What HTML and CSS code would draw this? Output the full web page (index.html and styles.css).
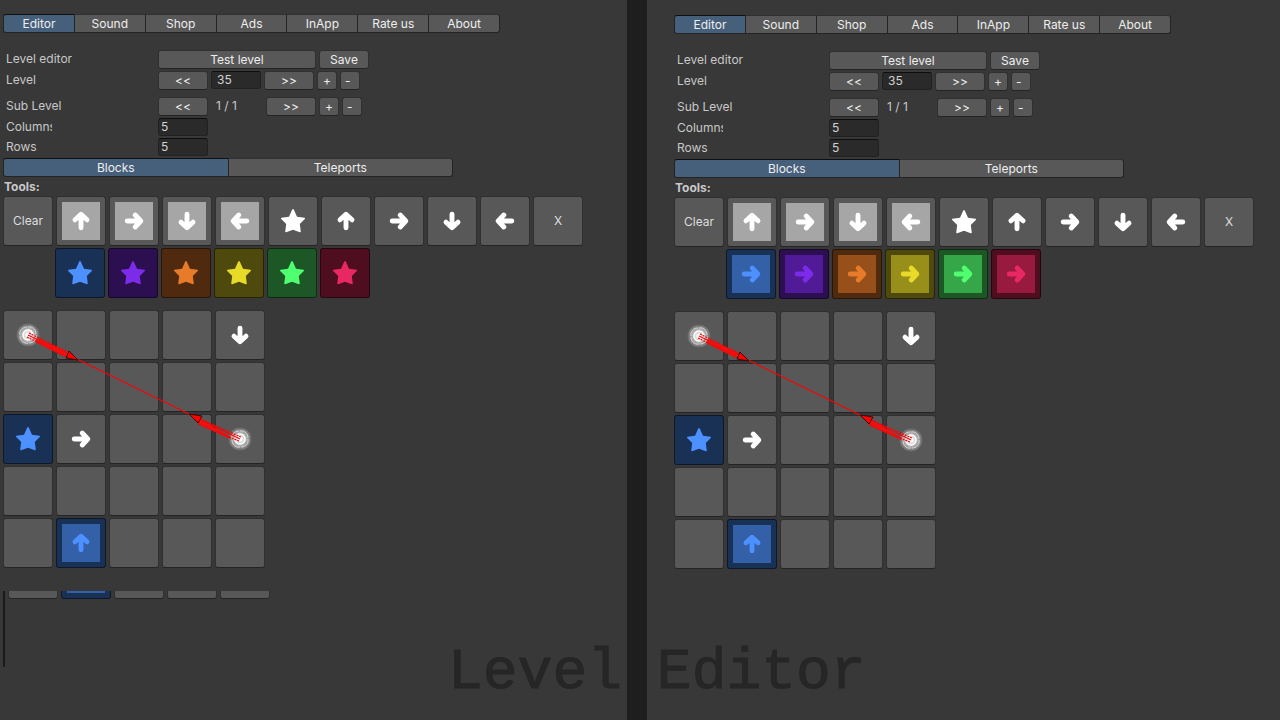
FILE: index.html
```html
<!DOCTYPE html>
<html lang="en">

<head>
    <meta charset="utf-8">
    <meta name="viewport" content="width=device-width, initial-scale=1.0">
    <title>Level Editor</title>
    <link rel="stylesheet" href="styles.css">
</head>

<body>
    <svg class="symbols" aria-hidden="true">
        <symbol id="arrow" viewBox="0 0 24 24">
            <path d="M5.2 12H18M13.2 6l5.6 6-5.6 6" fill="none" stroke="currentColor" stroke-width="4.9" stroke-linecap="round" stroke-linejoin="round" />
        </symbol>
        <symbol id="star" viewBox="0 0 24 24">
            <path d="M12 0Q12.500 0 13 1L16 7.800 23.500 8.800Q24.500 9.200 23.800 10L18.800 15 19.800 22.500Q19.600 23.500 18.800 23.300L12 20.800 5.200 23.300Q4.400 23.500 4.200 22.500L5.200 15 .2 10Q-.5 9.200.5 8.800L8 7.800 11 1Q11.500 0 12 0z" fill="currentColor" />
        </symbol>
        <radialGradient id="glow">
            <stop offset="0" stop-color="#fff" />
            <stop offset=".4" stop-color="#fff" stop-opacity=".7" />
            <stop offset=".7" stop-color="#fff" stop-opacity=".35" />
            <stop offset="1" stop-color="#fff" stop-opacity="0" />
        </radialGradient>
        <symbol id="portal" viewBox="0 0 24 24">
            <circle cx="12" cy="12" r="12" fill="url(#glow)" />
            <g fill="none" stroke="#fff">
                <circle cx="12" cy="12" r="5" stroke-width="1.500" />
                <path d="M12 4c5-1 8 3 8 7M20 12c1 5-3 8-7 8M12 20c-5 1-8-3-8-7M4 12c-1-5 3-8 7-8" stroke-width=".9" opacity=".7" />
                <path d="M14 2c5 1 8 4 8 8M22 14c-1 5-4 8-8 8M10 22c-5-1-8-4-8-8M2 10c1-5 4-8 8-8" stroke-width=".6" opacity=".15" />
            </g>
            <circle cx="12" cy="12" r="2.500" fill="#fff" />
        </symbol>
    </svg>

    <main>
        <section class="panel">
            <nav class="tabs">
                <button class="active">Editor</button>
                <button>Sound</button>
                <button>Shop</button>
                <button>Ads</button>
                <button>InApp</button>
                <button>Rate us</button>
                <button>About</button>
            </nav>

            <div class="fields">
                <div class="row">
                    <span class="name">Level editor</span>
                    <button class="test">Test level</button>
                    <button class="wide">Save</button>
                </div>
                <div class="row">
                    <label class="name" for="level-a">Level</label>
                    <button class="wide">&lt;&lt;</button>
                    <input class="level" id="level-a" type="text" value="35">
                    <button class="wide">&gt;&gt;</button>
                    <button class="small">+</button>
                    <button class="small minus">-</button>
                </div>
                <div class="row sub">
                    <span class="name">Sub Level</span>
                    <button class="wide">&lt;&lt;</button>
                    <span class="count">1 / 1</span>
                    <button class="wide">&gt;&gt;</button>
                    <button class="small">+</button>
                    <button class="small minus">-</button>
                </div>
                <div class="row">
                    <label class="name" for="columns-a"><span class="short">Columns</span></label>
                    <input id="columns-a" type="text" value="5">
                </div>
                <div class="row">
                    <label class="name" for="rows-a">Rows</label>
                    <input id="rows-a" type="text" value="5">
                </div>
            </div>

            <nav class="tabs modes">
                <button class="active">Blocks</button>
                <button>Teleports</button>
            </nav>

            <h2>Tools:</h2>
            <div class="cells tools"></div>
            <div class="cells colors" data-icon="star"></div>
            <div class="board"></div>
            <div class="rest">
                <div class="cells strip"></div>
            </div>
        </section>

        <section class="panel">
            <nav class="tabs">
                <button class="active">Editor</button>
                <button>Sound</button>
                <button>Shop</button>
                <button>Ads</button>
                <button>InApp</button>
                <button>Rate us</button>
                <button>About</button>
            </nav>

            <div class="fields">
                <div class="row">
                    <span class="name">Level editor</span>
                    <button class="test">Test level</button>
                    <button class="wide">Save</button>
                </div>
                <div class="row">
                    <label class="name" for="level-b">Level</label>
                    <button class="wide">&lt;&lt;</button>
                    <input class="level" id="level-b" type="text" value="35">
                    <button class="wide">&gt;&gt;</button>
                    <button class="small">+</button>
                    <button class="small minus">-</button>
                </div>
                <div class="row sub">
                    <span class="name">Sub Level</span>
                    <button class="wide">&lt;&lt;</button>
                    <span class="count">1 / 1</span>
                    <button class="wide">&gt;&gt;</button>
                    <button class="small">+</button>
                    <button class="small minus">-</button>
                </div>
                <div class="row">
                    <label class="name" for="columns-b"><span class="short">Columns</span></label>
                    <input id="columns-b" type="text" value="5">
                </div>
                <div class="row">
                    <label class="name" for="rows-b">Rows</label>
                    <input id="rows-b" type="text" value="5">
                </div>
            </div>

            <nav class="tabs modes">
                <button class="active">Blocks</button>
                <button>Teleports</button>
            </nav>

            <h2>Tools:</h2>
            <div class="cells tools"></div>
            <div class="cells colors" data-icon="tile right"></div>
            <div class="board"></div>
        </section>
    </main>

    <h1>Level Editor</h1>

    <template>
        <svg class="links" viewBox="0 0 262 258" aria-hidden="true">
            <path class="line" d="M25 25 237 129" />
            <path class="shaft" d="M34 28 65 42 62 47 32 32zM228 127 197 109 195 114 227 129z" />
            <path class="line" d="M26 23 64 42M24 27 62 46M238 127 197 109M236 131 195 114" stroke-dasharray="2 1" />
            <path class="head" d="M75 50 66 41 63 48zM186 104 199 106 195 113z" />
        </svg>
    </template>

    <script src="script.js"></script>
</body>

</html>
```
FILE: styles.css
```css
* {
    box-sizing: border-box;
}

body {
    margin: 0;
    background-color: #383838;
    color: #c8c8c8;
    font-family: Inter, sans-serif;
    font-size: 12px;
    line-height: 18px;
}

.symbols {
    position: absolute;
    width: 0;
    height: 0;
}

main {
    display: grid;
    grid-template-columns: 627fr 653fr;
    min-height: 100vh;
}

.panel {
    padding: 14px 0 0 3px;
}

.panel + .panel {
    padding: 15px 0 0 27px;
    border-left: 20px solid #1e1e1e;
}

button {
    height: 19px;
    padding: 0;
    border: 1px solid #303030;
    border-bottom-color: #242424;
    border-radius: 3px;
    background-color: #585858;
    color: #eeeeee;
    font: inherit;
}

input {
    width: 50px;
    height: 18px;
    padding: 0 2px;
    border: 1px solid #212121;
    border-top-color: #0d0d0d;
    border-radius: 3px;
    background-color: #2a2a2a;
    color: #d2d2d2;
    font: inherit;
}

.tabs {
    display: flex;
    width: 497px;
}

.tabs button {
    flex: 1;
    border-radius: 0;
    border-left-width: 0;
    border-right-color: #242424;
}

.tabs button:first-child {
    border-left-width: 1px;
    border-radius: 3px 0 0 3px;
}

.tabs button:last-child {
    border-radius: 0 3px 3px 0;
}

.tabs .active {
    background-color: #46607c;
    border-color: #101010 #242424 #242424;
}

.modes {
    width: 450px;
}

.fields {
    display: flex;
    flex-direction: column;
    gap: 2px;
    margin: 17px 0 2px;
}

.row {
    display: flex;
    gap: 3px;
}

.sub {
    margin-top: 5px;
}

.name {
    width: 152px;
    padding-left: 3px;
}

.short {
    display: block;
    width: 46px;
    overflow: hidden;
}

.test {
    width: 158px;
}

.wide {
    width: 50px;
}

.small {
    width: 20px;
}

.minus {
    padding-left: 4px;
    text-align: left;
}

.level {
    padding-left: 5px;
}

.count {
    width: 52px;
    padding-left: 5px;
}

h2 {
    margin: 0;
    padding: 1px 1px 0;
    font-size: 12px;
    line-height: 18px;
}

.cells {
    display: grid;
    grid-template-columns: repeat(auto-fill, 50px);
    grid-auto-rows: 50px;
    gap: 2px 3px;
}

.colors {
    margin: 2px 0 12px 52px;
}

.board {
    position: relative;
    width: 262px;
}

.cell {
    display: flex;
    align-items: center;
    justify-content: center;
    width: 50px;
    height: 50px;
    color: #ffffff;
}

.cell.text {
    color: #dddddd;
}

.cell svg {
    width: 24px;
    height: 24px;
}

.tile svg {
    width: 38px;
    height: 38px;
    padding: 7px;
    background-color: #a6a6a6;
}

.down svg {
    transform: rotate(90deg);
}

.left svg {
    transform: rotate(180deg);
}

.up svg {
    transform: rotate(270deg);
}

.blue, .purple, .orange, .yellow, .green, .red {
    border-color: rgba(0, 0, 0, 0.5);
}

.blue {
    background-color: #1a3156;
    color: #4d90ff;
}

.blue.tile svg {
    background-color: #3460a8;
}

.purple {
    background-color: #2b0f50;
    color: #7c2be8;
}

.purple.tile svg {
    background-color: #511b98;
}

.orange {
    background-color: #4f2a0e;
    color: #e87b29;
}

.orange.tile svg {
    background-color: #98501a;
}

.yellow {
    background-color: #4e490d;
    color: #e8da28;
}

.yellow.tile svg {
    background-color: #988f1a;
}

.green {
    background-color: #1c5725;
    color: #50ff70;
}

.green.tile svg {
    background-color: #35a749;
}

.red {
    background-color: #4f0d20;
    color: #e82860;
}

.red.tile svg {
    background-color: #981a3f;
}

.links {
    position: absolute;
    top: 0;
    left: 0;
    width: 262px;
    height: 258px;
    pointer-events: none;
}

.line {
    fill: none;
    stroke: #ff0000;
    stroke-width: 1.2;
}

.shaft {
    fill: #f01010;
}

.head {
    fill: #ff0000;
    stroke: #200000;
    stroke-width: 0.8;
}

.rest {
    height: 76px;
    margin-top: 23px;
    border-left: 2px solid #1a1a1a;
    padding-left: 3px;
}

.strip {
    height: 8px;
    align-content: end;
    overflow: hidden;
}

h1 {
    position: absolute;
    left: 35%;
    bottom: 14px;
    margin: 0;
    color: #262626;
    font-family: "Liberation Mono", monospace;
    font-size: 58px;
    font-weight: normal;
    line-height: 66px;
    -webkit-text-stroke: 1px #262626;
    pointer-events: none;
}
```
FILE: script.js
```js
const tools = ["Clear", "tile up", "tile right", "tile down", "tile left", "star", "up", "right", "down", "left", "X"];
const colors = ["blue", "purple", "orange", "yellow", "green", "red"];
const level = [
    ["portal", "", "", "", "down"],
    ["", "", "", "", ""],
    ["blue star", "right", "", "", "portal"],
    ["", "", "", "", ""],
    ["", "blue tile up", "", "", ""]
];

function makeCell(type) {
    const cell = document.createElement("button");
    cell.className = "cell " + type;

    if (type === "Clear" || type === "X") {
        cell.className = "cell text";
        cell.textContent = type;
        return cell;
    }

    cell.setAttribute("aria-label", type || "empty");
    if (type) {
        let icon = "arrow";
        if (type.includes("star")) icon = "star";
        if (type.includes("portal")) icon = "portal";
        cell.innerHTML = `<svg viewBox="0 0 24 24"><use href="#${icon}"></use></svg>`;
    }
    return cell;
}

function fill(container, types) {
    types.forEach((type) => container.appendChild(makeCell(type)));
}

document.querySelectorAll(".tools").forEach((row) => fill(row, tools));

document.querySelectorAll(".colors").forEach((row) => {
    fill(row, colors.map((color) => color + " " + row.dataset.icon));
});

document.querySelectorAll(".board").forEach((board) => {
    const cells = document.createElement("div");
    cells.className = "cells";
    fill(cells, level.flat());
    board.appendChild(cells);
    board.appendChild(document.querySelector("template").content.cloneNode(true));
});

fill(document.querySelector(".strip"), level[4]);
```
